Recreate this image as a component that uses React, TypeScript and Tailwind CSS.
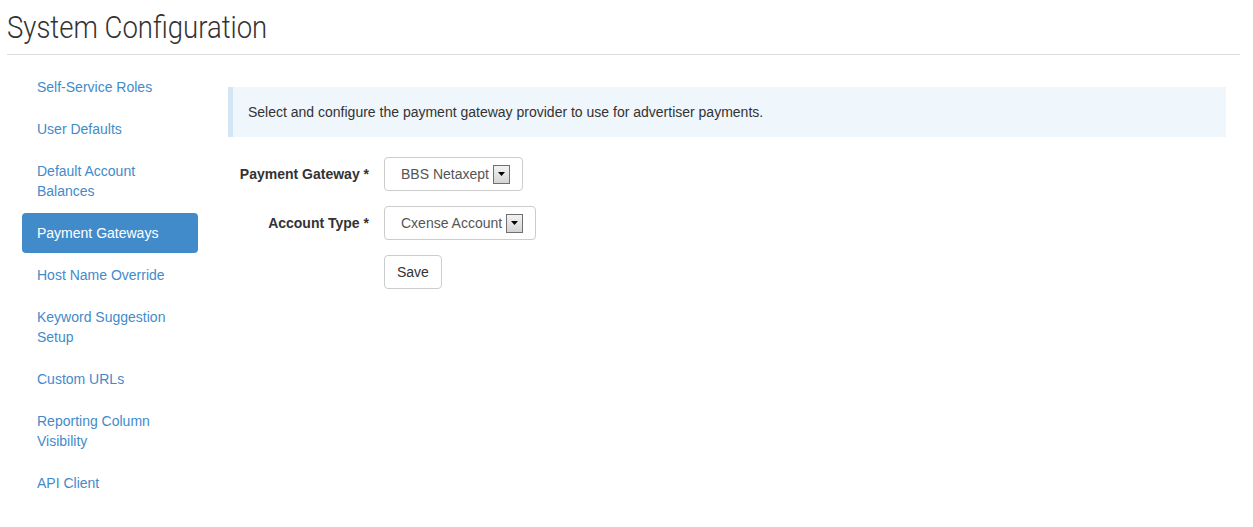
import React from 'react';

const navItems = [
  'Self-Service Roles',
  'User Defaults',
  'Default Account Balances',
  'Payment Gateways',
  'Host Name Override',
  'Keyword Suggestion Setup',
  'Custom URLs',
  'Reporting Column Visibility',
  'API Client',
];

function SelectBox({ value }: { value: string }) {
  return (
    <div className="flex h-[34px] items-center rounded-[4px] border border-[#cccccc] bg-white pl-[16px] pr-[12px] text-[14px] text-[#555555]">
      <span>{value}</span>
      <span className="ml-[4px] flex h-[19px] w-[17px] items-center justify-center border border-[#707070] bg-gradient-to-b from-[#f2f2f2] to-[#d4d4d4]">
        <svg width="7" height="4" viewBox="0 0 7 4">
          <path d="M0 0h7L3.5 4z" fill="#000" />
        </svg>
      </span>
    </div>
  );
}

export default function App() {
  return (
    <div className="min-h-screen bg-white pl-[7px] pr-[13px] font-['Liberation_Sans',Arial,sans-serif] text-[14px] text-[#333333]">
      {/* Page header */}
      <h1 className="border-b border-[#dddddd] pb-[9px] pt-[10px] font-['Roboto',sans-serif] text-[32px] font-light leading-[35px] text-[#333333]">
        <span className="inline-block origin-left scale-x-[0.86] whitespace-nowrap">System Configuration</span>
      </h1>

      <div className="flex pt-[12px]">
        {/* Side nav */}
        <ul className="ml-[15px] w-[176px] shrink-0">
          {navItems.map((item, i) => (
            <li key={item} className={i > 0 ? 'mt-[2px]' : ''}>
              <a
                className={
                  item === 'Payment Gateways'
                    ? 'block rounded-[4px] bg-[#428bca] px-[15px] py-[10px] leading-[20px] text-white'
                    : 'block rounded-[4px] px-[15px] py-[10px] leading-[20px] text-[#428bca]'
                }
              >
                {item}
              </a>
            </li>
          ))}
        </ul>

        {/* Main */}
        <div className="ml-[30px] mr-[14px] flex-1 pt-[20px]">
          <div className="border-l-[5px] border-[#d4e6f4] bg-[#eff6fc] px-[15px] py-[15px] leading-[20px]">
            Select and configure the payment gateway provider to use for advertiser payments.
          </div>

          <div className="mt-[20px] flex flex-col gap-[15px]">
            <div className="flex items-center">
              <label className="w-[156px] pr-[15px] text-right font-bold">Payment Gateway *</label>
              <SelectBox value="BBS Netaxept" />
            </div>
            <div className="flex items-center">
              <label className="w-[156px] pr-[15px] text-right font-bold">Account Type *</label>
              <SelectBox value="Cxense Account" />
            </div>
            <div className="flex items-center">
              <div className="w-[156px]" />
              <button className="h-[34px] rounded-[4px] border border-[#cccccc] bg-white px-[12px] leading-[20px] text-[#333333]">
                Save
              </button>
            </div>
          </div>
        </div>
      </div>
    </div>
  );
}
